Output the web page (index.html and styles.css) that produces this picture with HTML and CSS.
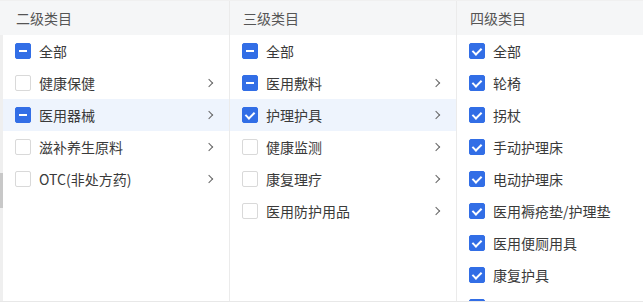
FILE: index.html
```html
<!DOCTYPE html>
<html lang="zh-CN">
   <head>
      <meta charset="UTF-8">
      <meta name="viewport" content="width=device-width, initial-scale=1.0">
      <title>类目选择</title>
      <link rel="stylesheet" href="styles.css">
   </head>
   <body>
      <div class="picker">
         <div class="col col-first">
            <div class="col-head">二级类目</div>
            <div class="col-body">
               <div class="rail"><div class="thumb"></div></div>
               <ul class="list">
                  <li class="item"><span class="box half"></span><span class="label">全部</span></li>
                  <li class="item"><span class="box"></span><span class="label">健康保健</span><i class="arrow"></i></li>
                  <li class="item active"><span class="box half"></span><span class="label">医用器械</span><i class="arrow"></i></li>
                  <li class="item"><span class="box"></span><span class="label">滋补养生原料</span><i class="arrow"></i></li>
                  <li class="item"><span class="box"></span><span class="label">OTC(非处方药)</span><i class="arrow"></i></li>
               </ul>
            </div>
         </div>
         <div class="col">
            <div class="col-head">三级类目</div>
            <ul class="list">
               <li class="item"><span class="box half"></span><span class="label">全部</span></li>
               <li class="item"><span class="box half"></span><span class="label">医用敷料</span><i class="arrow"></i></li>
               <li class="item active"><span class="box on"></span><span class="label">护理护具</span><i class="arrow"></i></li>
               <li class="item"><span class="box"></span><span class="label">健康监测</span><i class="arrow"></i></li>
               <li class="item"><span class="box"></span><span class="label">康复理疗</span><i class="arrow"></i></li>
               <li class="item"><span class="box"></span><span class="label">医用防护用品</span><i class="arrow"></i></li>
            </ul>
         </div>
         <div class="col col-last">
            <div class="col-head">四级类目</div>
            <ul class="list">
               <li class="item"><span class="box on"></span><span class="label">全部</span></li>
               <li class="item"><span class="box on"></span><span class="label">轮椅</span></li>
               <li class="item"><span class="box on"></span><span class="label">拐杖</span></li>
               <li class="item"><span class="box on"></span><span class="label">手动护理床</span></li>
               <li class="item"><span class="box on"></span><span class="label">电动护理床</span></li>
               <li class="item"><span class="box on"></span><span class="label">医用褥疮垫/护理垫</span></li>
               <li class="item"><span class="box on"></span><span class="label">医用便厕用具</span></li>
               <li class="item"><span class="box on"></span><span class="label">康复护具</span></li>
               <li class="item"><span class="box on"></span><span class="label"></span></li>
            </ul>
         </div>
      </div>
   </body>
</html>
```

FILE: styles.css
```css
body {
   margin: 0;
   background: #fff;
   font-family: "Noto Sans CJK SC", "Noto Sans", sans-serif;
   font-size: 14px;
   color: #3a3a3a;
}
.picker {
   display: flex;
   height: 300px;
   overflow: hidden;
   border-top: 1px solid #f0f0f0;
   border-bottom: 1px solid #e8e8e8;
}
.col {
   width: 226px;
   flex: none;
   border-right: 1px solid #ebebeb;
   display: flex;
   flex-direction: column;
}
.col-first {
   width: 229px;
}
.col-last {
   flex: 1;
   border-right: none;
}
.col-head {
   height: 34px;
   flex: none;
   display: flex;
   align-items: center;
   padding-left: 13px;
   background: #f5f6f7;
   color: #555;
}
.col-first .col-head {
   padding-left: 16px;
}
.col-body {
   display: flex;
   flex: 1;
}
.rail {
   width: 3px;
   flex: none;
   background: #efefef;
}
.thumb {
   margin-top: 138px;
   height: 35px;
   background: #c8c8c8;
}
.list {
   list-style: none;
   margin: 0;
   padding: 0;
   flex: 1;
}
.item {
   height: 32px;
   display: flex;
   align-items: center;
   padding: 0 15px 0 12px;
}
.item.active {
   background: #eef4fd;
}
.box {
   width: 16px;
   height: 16px;
   box-sizing: border-box;
   border: 1px solid #d9d9d9;
   border-radius: 2px;
   background: #fff;
   flex: none;
   position: relative;
}
.box.half, .box.on {
   background: #326ee6;
   border-color: #326ee6;
}
.box.half::after {
   content: "";
   position: absolute;
   left: 3px;
   top: 6px;
   width: 8px;
   height: 2px;
   background: #fff;
}
.box.on::after {
   content: "";
   position: absolute;
   left: 4px;
   top: 2px;
   width: 4px;
   height: 7px;
   border: solid #fff;
   border-width: 0 2px 2px 0;
   transform: rotate(45deg);
}
.label {
   margin-left: 8px;
   flex: 1;
   white-space: nowrap;
}
.arrow {
   width: 5px;
   height: 5px;
   border: solid #666;
   border-width: 1px 1px 0 0;
   transform: rotate(45deg);
   margin-right: 2px;
}
```
